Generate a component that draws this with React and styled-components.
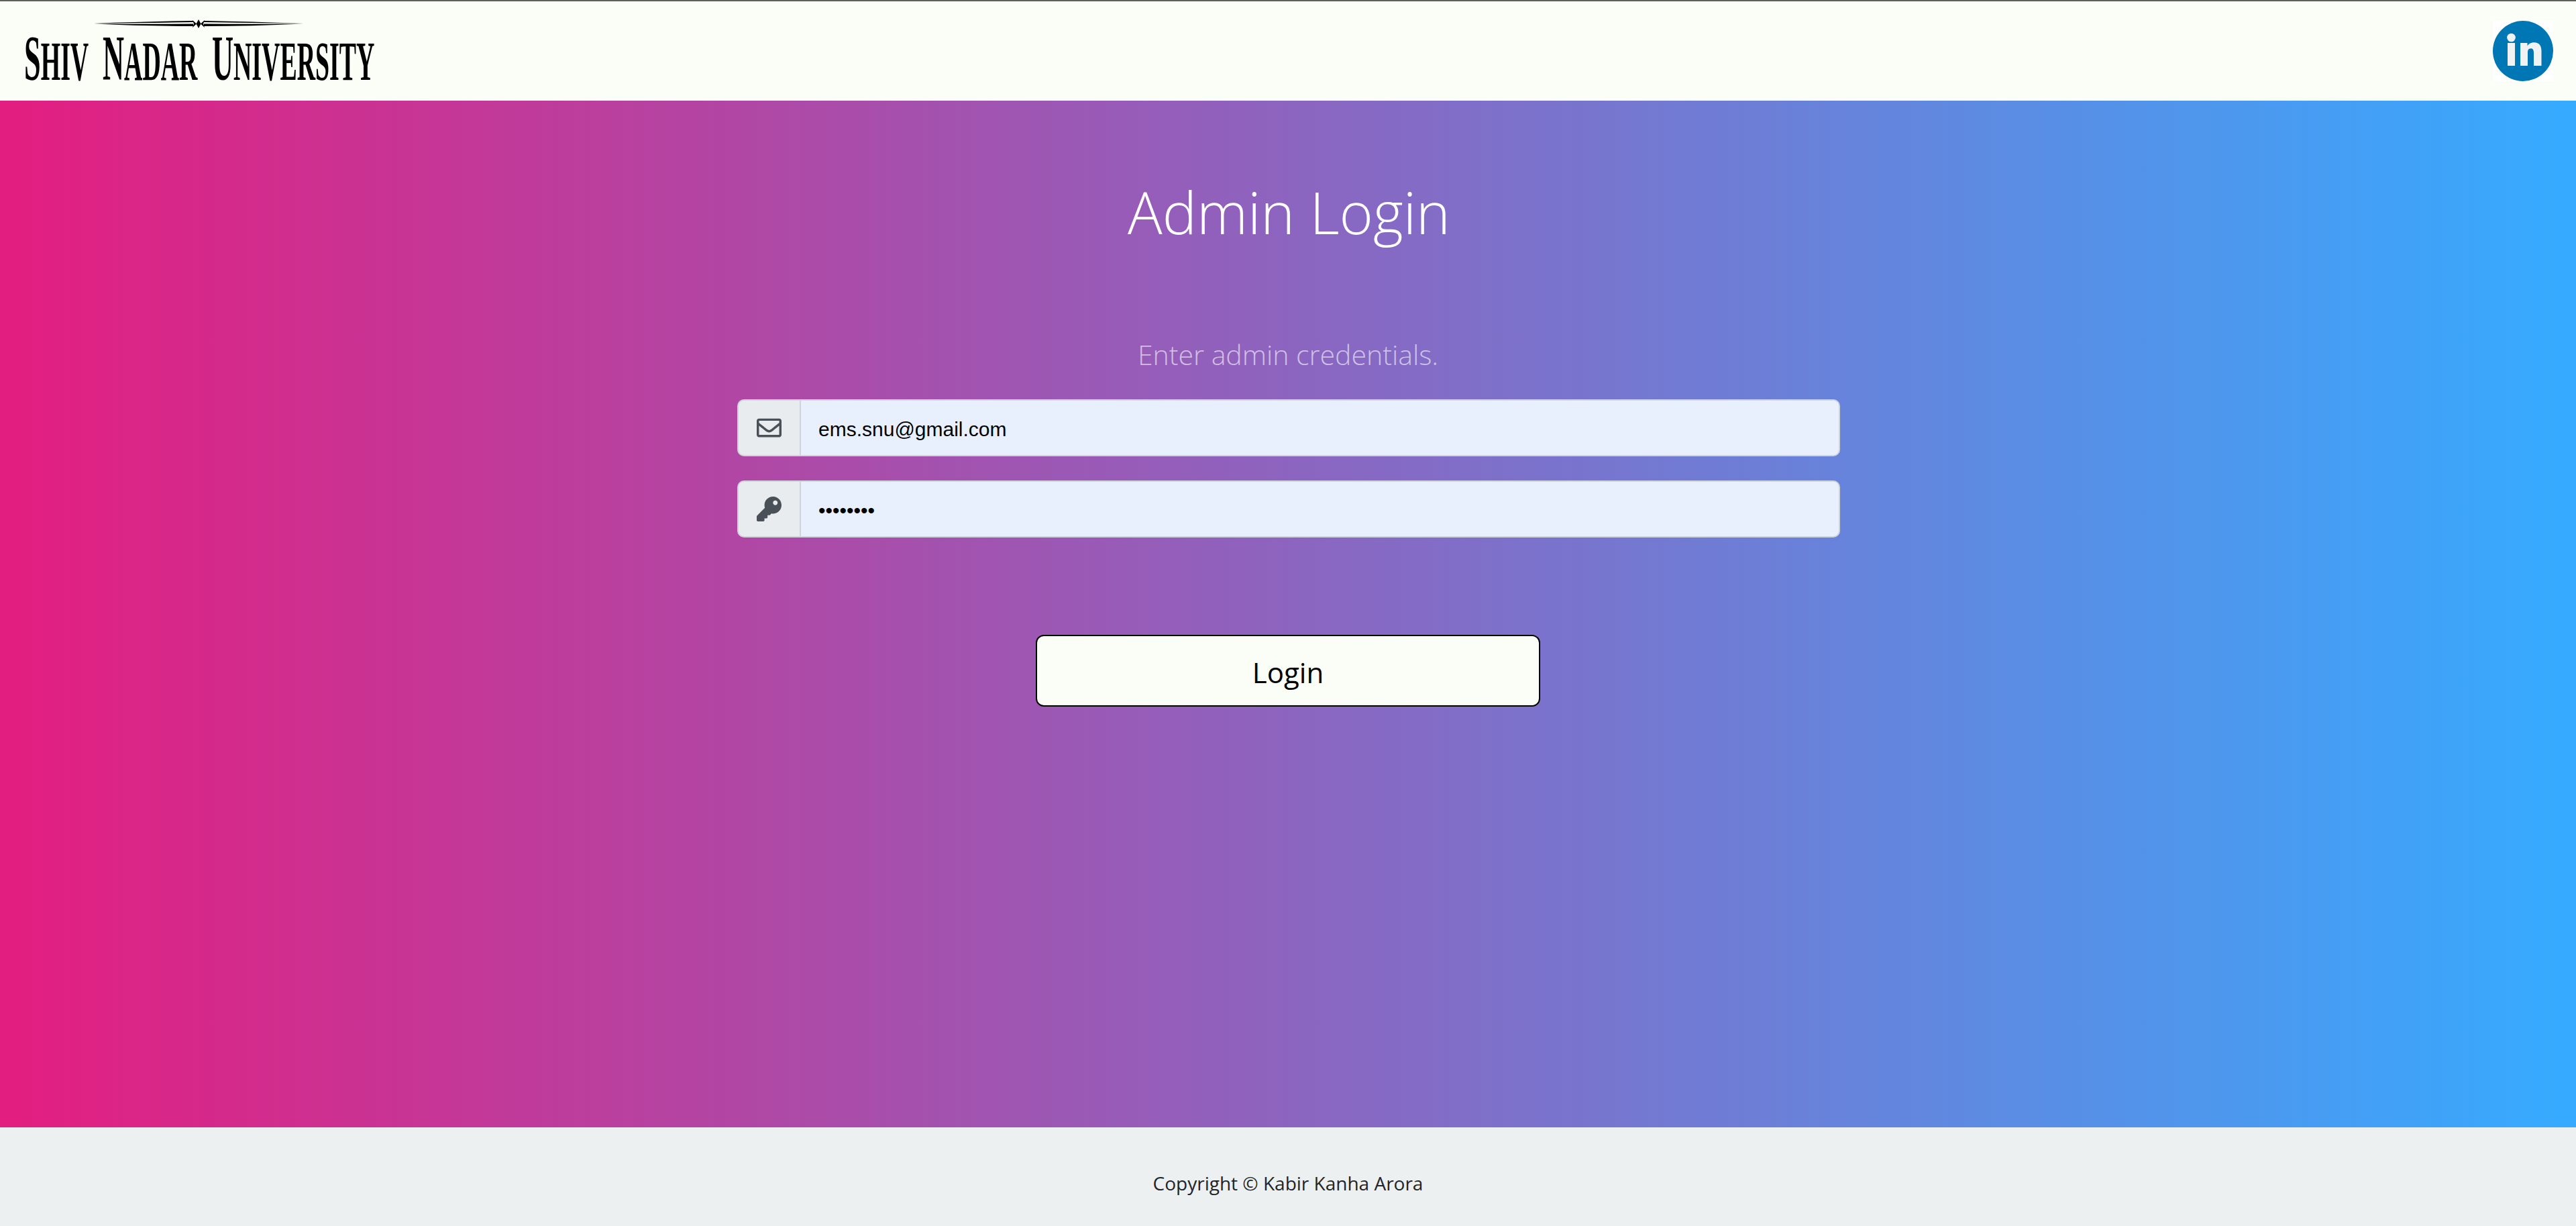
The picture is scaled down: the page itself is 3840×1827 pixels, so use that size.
import React from 'react';
import styled, { createGlobalStyle } from 'styled-components';
import { FaRegEnvelope, FaKey } from 'react-icons/fa';

const GlobalStyle = createGlobalStyle`
  * {
    box-sizing: border-box;
  }
  html,
  body {
    margin: 0;
    padding: 0;
  }
  body {
    font-family: 'Open Sans', 'Noto Sans', sans-serif;
    color: #212529;
  }
`;

const Page = styled.div`
  display: flex;
  flex-direction: column;
  min-height: 1827px;
`;

const Navbar = styled.header`
  display: flex;
  align-items: center;
  justify-content: space-between;
  height: 150px;
  padding: 0 34px 0 30px;
  background: #fbfef6;
  border-top: 2px solid #5c5f5a;
`;

const Main = styled.main`
  flex: 1;
  display: flex;
  flex-direction: column;
  align-items: center;
  background: linear-gradient(to right, #e31e80, #35abff);
`;

const Title = styled.h1`
  margin: 101px 0 0;
  padding-left: 3px;
  font-size: 86px;
  font-weight: 300;
  line-height: 130px;
  color: #fff;
`;

const Subtitle = styled.p`
  margin: 117px 0 0;
  font-size: 41px;
  font-weight: 300;
  line-height: 60px;
  color: rgba(255, 255, 255, 0.6);
`;

const Form = styled.form`
  display: flex;
  flex-direction: column;
  align-items: center;
  margin-top: 37px;
`;

const InputGroup = styled.div`
  display: flex;
  width: 1644px;
  height: 85px;
  margin: 0 0 36px 2px;
`;

const Addon = styled.span`
  display: flex;
  align-items: center;
  justify-content: center;
  width: 95px;
  flex: none;
  background: #e9ecef;
  border: 2px solid #ced4da;
  border-radius: 10px 0 0 10px;
  color: #495057;
  font-size: 37px;
`;

const Input = styled.input`
  flex: 1;
  min-width: 0;
  padding: 5px 26px 0;
  background: #e8f0fe;
  border: 2px solid #ced4da;
  border-left: 0;
  border-radius: 0 10px 10px 0;
  font-family: 'Liberation Sans', Arial, sans-serif;
  font-size: 30px;
  color: #000;
  outline: none;
`;

const LoginButton = styled.button`
  width: 752px;
  height: 107px;
  margin-top: 109px;
  padding-top: 4px;
  background: #fbfef6;
  border: 2px solid #000;
  border-radius: 12px;
  font-family: inherit;
  font-size: 42px;
  font-weight: 400;
  color: #000;
`;

const Footer = styled.footer`
  display: flex;
  align-items: center;
  justify-content: center;
  height: 147px;
  padding-top: 18px;
  background: #ecf0f1;
  font-size: 28px;
  font-weight: 400;
`;

const Logo = () => (
  <svg width="540" height="140" viewBox="0 0 540 140" aria-label="Shiv Nadar University">
    <g fill="#000" transform="translate(0 15)">
      <path d="M110 14 Q 190 11 258 10 L 258 12 Q 190 13 110 14 Z" />
      <path d="M110 14.5 Q 190 15 258 14.5 L 258 18 Q 190 18 110 14.5 Z" />
      <path d="M422 14 Q 342 11 274 10 L 274 12 Q 342 13 422 14 Z" />
      <path d="M422 14.5 Q 342 15 274 14.5 L 274 18 Q 342 18 422 14.5 Z" />
      <path d="M266 8 L 269.5 14.5 L 266 21 L 262.5 14.5 Z" />
      <path d="M257 9 L 263 14.5 L 257 20 L 259 14.5 Z" />
      <path d="M275 9 L 269 14.5 L 275 20 L 273 14.5 Z" />
    </g>
    <text
      transform="translate(6 113) scale(0.462 1)"
      fontFamily="'Liberation Serif', serif"
      fontWeight="700"
      fontSize="82"
      wordSpacing="26"
    >
      <tspan fontSize="96">S</tspan>HIV <tspan fontSize="96">N</tspan>ADAR <tspan fontSize="96">U</tspan>NIVERSITY
    </text>
  </svg>
);

const LinkedInBadge = () => (
  <svg width="90" height="90" viewBox="0 0 90 90" aria-label="LinkedIn">
    <rect width="90" height="90" fill="#fff" />
    <circle cx="45" cy="45" r="45" fill="#0077b5" />
    <g fill="#f1f2f2">
      <circle cx="27.5" cy="25" r="6.3" />
      <rect x="22" y="33" width="11" height="34" />
      <path d="M41 33h10.5v4.6c1.6-3 5-5.4 10-5.4 8 0 11 5 11 13.2V67H61V47.5c0-3.8-1-6.3-4.4-6.3-3.6 0-4.6 2.8-4.6 6.3V67H41Z" />
    </g>
  </svg>
);

const App = () => (
  <>
    <GlobalStyle />
    <Page>
      <Navbar>
        <Logo />
        <LinkedInBadge />
      </Navbar>
      <Main>
        <Title>Admin Login</Title>
        <Subtitle>Enter admin credentials.</Subtitle>
        <Form>
          <InputGroup>
            <Addon><FaRegEnvelope /></Addon>
            <Input type="email" defaultValue="ems.snu@gmail.com" />
          </InputGroup>
          <InputGroup>
            <Addon><FaKey /></Addon>
            <Input type="password" defaultValue="password" />
          </InputGroup>
          <LoginButton type="button">Login</LoginButton>
        </Form>
      </Main>
      <Footer>Copyright © Kabir Kanha Arora</Footer>
    </Page>
  </>
);

export default App;
